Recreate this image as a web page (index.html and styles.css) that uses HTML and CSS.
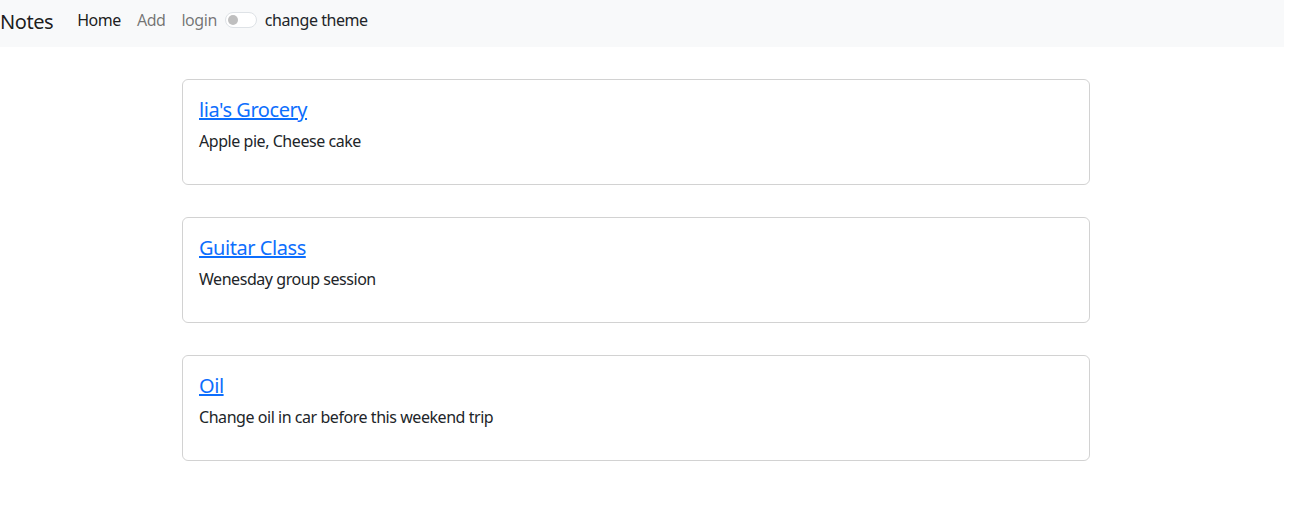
FILE: index.html
```html
<!DOCTYPE html>
<html>
<head>
<meta charset="utf-8">
<link rel="stylesheet" href="styles.css">
</head>
<body>
<nav class="navbar">
  <a class="brand" href="#">Notes</a>
  <ul class="nav">
    <li><a class="nav-link active" href="#">Home</a></li>
    <li><a class="nav-link" href="#">Add</a></li>
    <li><a class="nav-link" href="#">login</a></li>
  </ul>
  <div class="switch">
    <span class="switch-track"><span class="switch-knob"></span></span>
    <label class="switch-label">change theme</label>
  </div>
</nav>
<main class="notes">
  <div class="card">
    <h5 class="card-title"><a href="#">lia's Grocery</a></h5>
    <p class="card-text">Apple pie, Cheese cake</p>
  </div>
  <div class="card">
    <h5 class="card-title"><a href="#">Guitar Class</a></h5>
    <p class="card-text">Wenesday group session</p>
  </div>
  <div class="card">
    <h5 class="card-title"><a href="#">Oil</a></h5>
    <p class="card-text">Change oil in car before this weekend trip</p>
  </div>
</main>
</body>
</html>
```
FILE: styles.css
```css
* { box-sizing: border-box; }
html, body { margin: 0; padding: 0; background: #fff; }
body {
  font-family: "Noto Sans", "Open Sans", sans-serif;
  font-size: 16px;
  line-height: 1.5;
  letter-spacing: -0.45px;
  color: #212529;
  width: 1284px;
}
.navbar {
  height: 47px;
  padding-bottom: 7px;
  background: #f8f9fa;
  display: flex;
  align-items: center;
}
.brand {
  font-size: 20px;
  color: rgba(0,0,0,.9);
  text-decoration: none;
  margin-right: 16px;
  line-height: 30px;
  padding-top: 3px;
}
.nav {
  list-style: none;
  margin: 0;
  padding: 0;
  display: flex;
}
.nav-link {
  display: block;
  padding: 8px;
  color: rgba(0,0,0,.55);
  text-decoration: none;
}
.nav-link.active { color: rgba(0,0,0,.9); }
.switch {
  display: flex;
  align-items: center;
}
.switch-track {
  width: 32px;
  height: 16px;
  border: 1px solid #dee2e6;
  border-radius: 8px;
  background: #fff;
  display: flex;
  align-items: center;
  padding-left: 2px;
  margin-right: 8px;
}
.switch-knob {
  width: 10px;
  height: 10px;
  border-radius: 50%;
  background: #bfbfbf;
}
.switch-label { color: #212529; }
.notes {
  display: flex;
  flex-direction: column;
  gap: 32px;
  padding: 32px 0 0 182px;
}
.card {
  width: 908px;
  border: 1px solid rgba(0,0,0,.175);
  border-radius: 6px;
  padding: 16px;
}
.card-title {
  margin: 0 0 7px;
  padding-top: 2px;
  font-size: 20px;
  font-weight: 400;
  line-height: 24px;
}
.card-title a { color: #0d6efd; text-decoration: underline; }
.card-text { margin: 0 0 15px; line-height: 24px; }
```
